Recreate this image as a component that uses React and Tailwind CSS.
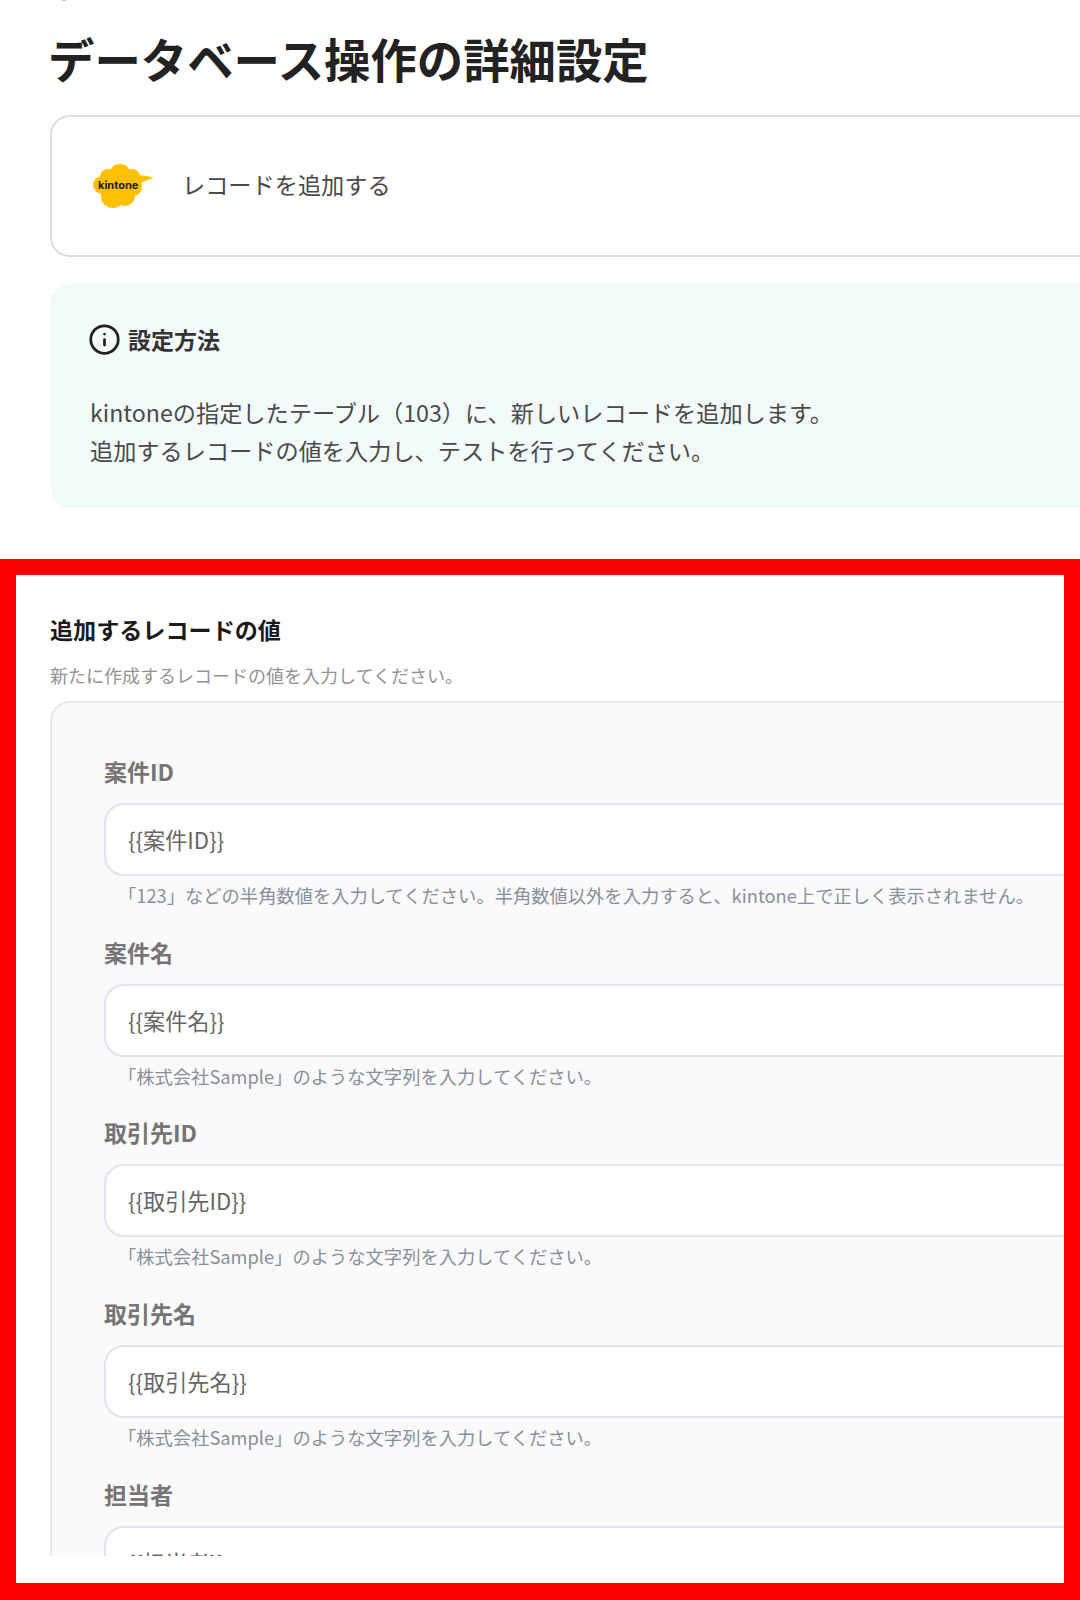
import React from "react";
import { Info } from "lucide-react";

const fields = [
  ["案件ID", "{{案件ID}}", "「123」などの半角数値を入力してください。半角数値以外を入力すると、kintone上で正しく表示されません。"],
  ["案件名", "{{案件名}}", "「株式会社Sample」のような文字列を入力してください。"],
  ["取引先ID", "{{取引先ID}}", "「株式会社Sample」のような文字列を入力してください。"],
  ["取引先名", "{{取引先名}}", "「株式会社Sample」のような文字列を入力してください。"],
  ["担当者", "{{担当者}}", ""],
];

function Logo() {
  return (
    <div className="relative w-[64px] h-[46px] shrink-0">
      <svg width="64" height="46" viewBox="0 0 64 46" className="block">
        <g fill="#ffc000">
          <circle cx="28" cy="12" r="11" />
          <circle cx="16" cy="14" r="8" />
          <circle cx="40" cy="14" r="8" />
          <circle cx="10" cy="22" r="9" />
          <circle cx="21" cy="33" r="12" />
          <circle cx="33" cy="33" r="10" />
          <circle cx="41" cy="24" r="9" />
          <rect x="10" y="12" width="32" height="22" />
          <path d="M44 12 C50 12 57 13 62 15 C57 16 53 18 47 21 Z" />
        </g>
      </svg>
      <span className="absolute left-[6px] top-[15px] text-[11px] leading-[14px] font-bold text-[#1c1c1c] font-['Inter','Noto_Sans',sans-serif]">kintone</span>
    </div>
  );
}

export default function App() {
  return (
    <div className="w-[1080px] h-[1600px] overflow-hidden bg-white font-['Noto_Sans_CJK_JP','Noto_Sans',sans-serif]">
      <div className="pl-[50px] w-[1140px]">
        <div className="ml-[12px] w-[4px] h-[1px] bg-[#c4c4c4]" />
        <h1 className="pt-[26px] -ml-[2px] text-[46.4px] leading-[62px] font-bold text-[#222]">データベース操作の詳細設定</h1>
        <div className="mt-[26px] h-[142px] rounded-[20px] border-2 border-[#dedede] flex items-center pl-[40px] gap-[26px]">
          <Logo />
          <span className="-mt-[3px] text-[23.2px] text-[#4a4a4a]">レコードを追加する</span>
        </div>
        <div className="mt-[26px] h-[225px] rounded-[20px] bg-[#f2fafa] pl-[40px] pt-[42px]">
          <div className="flex items-center gap-[7px] h-[28px]">
            <Info size={33} strokeWidth={2} className="text-[#222] -ml-[2px]" />
            <span className="text-[23px] font-bold text-[#333]">設定方法</span>
          </div>
          <p className="mt-[41px] text-[23.2px] leading-[37.5px] text-[#4a4a4a]">
            kintoneの指定したテーブル（103）に、新しいレコードを追加します。<br />
            追加するレコードの値を入力し、テストを行ってください。
          </p>
        </div>
      </div>
      <section className="mt-[51px] h-[1041px] border-[16px] border-b-[17px] border-[#ff0000] overflow-hidden">
        <div className="h-[981px] overflow-hidden pl-[34px] pt-[39px]">
          <h2 className="text-[23.1px] leading-[30px] font-bold text-[#1a1a1a]">追加するレコードの値</h2>
          <p className="mt-[19px] text-[18px] leading-[24px] text-[#929292]">新たに作成するレコードの値を入力してください。</p>
          <div className="mt-[14px] w-[1100px] rounded-[20px] border-2 border-[#e5e9ee] bg-[#fafafa] pl-[52px] pt-[53px]">
            {fields.map(([label, value, help]) => (
              <div key={label} className="h-[180.7px]">
                <div className="text-[23px] leading-[30px] font-bold text-[#757575]">{label}</div>
                <div className="mt-[17px] h-[73px] rounded-[20px] border-2 border-[#dfe4ec] bg-white flex items-center pl-[22px] text-[22.2px] text-[#666]">{value}</div>
                {help && <p className="mt-[7px] -ml-[2px] pl-[16px] text-[18.3px] leading-[24px] text-[#87909a]">{help}</p>}
              </div>
            ))}
          </div>
        </div>
      </section>
    </div>
  );
}
